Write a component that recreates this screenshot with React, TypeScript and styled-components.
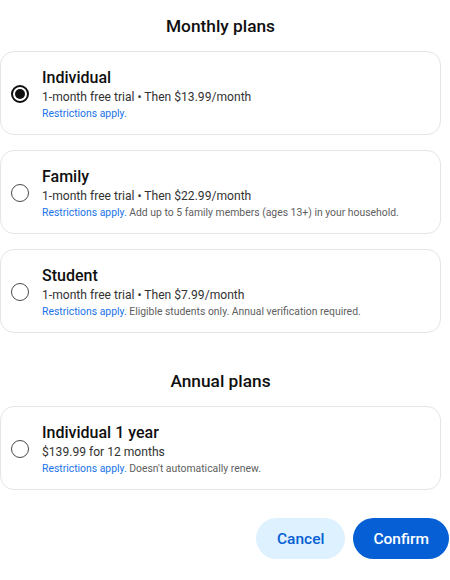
import React, { useState } from "react";
import styled, { createGlobalStyle } from "styled-components";

const GlobalStyle = createGlobalStyle`
  body {
    margin: 0;
    background: #ffffff;
    font-family: Roboto, "Liberation Sans", Arial, sans-serif;
    color: #0f0f0f;
  }
`;

const Page = styled.div`
  width: 441px;
  display: flex;
  flex-direction: column;
`;

const SectionTitle = styled.h2<{ $top: number }>`
  margin: 0;
  text-align: center;
  font-size: 17.3px;
  font-weight: 500;
  line-height: 24px;
  padding: ${(p) => p.$top}px 0 13px;
`;

const PlanList = styled.div`
  display: flex;
  flex-direction: column;
  gap: 15px;
`;

const PlanCard = styled.label`
  display: flex;
  align-items: center;
  gap: 13px;
  height: 84px;
  box-sizing: border-box;
  padding: 0 14px 0 10px;
  border: 1px solid #e5e5e5;
  border-radius: 14px;
  cursor: pointer;
`;

const Radio = styled.span<{ $checked: boolean }>`
  flex: none;
  width: 18px;
  height: 18px;
  box-sizing: border-box;
  border-radius: 50%;
  border: ${(p) => (p.$checked ? "2px solid #0f0f0f" : "1.5px solid #4a4a4a")};
  display: flex;
  align-items: center;
  justify-content: center;
  margin-top: 2px;

  &::after {
    content: "";
    width: 10px;
    height: 10px;
    border-radius: 50%;
    background: ${(p) => (p.$checked ? "#0f0f0f" : "transparent")};
  }
`;

const PlanText = styled.div`
  display: flex;
  flex-direction: column;
  margin-top: 2px;
`;

const PlanName = styled.div`
  font-size: 16px;
  font-weight: 500;
  line-height: 21px;
  color: #0f0f0f;
`;

const PlanPrice = styled.div`
  font-size: 12.1px;
  line-height: 19px;
  color: #333333;
`;

const PlanNote = styled.div`
  font-size: 10.4px;
  line-height: 14px;
  color: #606060;
`;

const Link = styled.span`
  color: #1a73e8;
`;

const Actions = styled.div`
  display: flex;
  justify-content: flex-end;
  gap: 8px;
  margin-top: 28px;
  margin-right: -8px;
`;

const Button = styled.button<{ $primary?: boolean }>`
  height: 41px;
  border: none;
  border-radius: 21px;
  padding: 0 ${(p) => (p.$primary ? "20px" : "21px")};
  font-family: Roboto, "Liberation Sans", Arial, sans-serif;
  font-size: 15.5px;
  font-weight: 500;
  cursor: pointer;
  background: ${(p) => (p.$primary ? "#065fd4" : "#def1ff")};
  color: ${(p) => (p.$primary ? "#ffffff" : "#065fd4")};
`;

type Plan = { id: string; name: string; price: string; note?: string };

const monthly: Plan[] = [
  { id: "individual", name: "Individual", price: "1-month free trial \u2022 Then $13.99/month" },
  {
    id: "family",
    name: "Family",
    price: "1-month free trial \u2022 Then $22.99/month",
    note: "Add up to 5 family members (ages 13+) in your household.",
  },
  {
    id: "student",
    name: "Student",
    price: "1-month free trial \u2022 Then $7.99/month",
    note: "Eligible students only. Annual verification required.",
  },
];

const annual: Plan[] = [
  {
    id: "individual-year",
    name: "Individual 1 year",
    price: "$139.99 for 12 months",
    note: "Doesn't automatically renew.",
  },
];

export default function App() {
  const [selected, setSelected] = useState("individual");

  const renderPlan = (plan: Plan) => (
    <PlanCard key={plan.id} onClick={() => setSelected(plan.id)}>
      <Radio $checked={selected === plan.id} />
      <PlanText>
        <PlanName>{plan.name}</PlanName>
        <PlanPrice>{plan.price}</PlanPrice>
        <PlanNote>
          <Link>Restrictions apply.</Link>
          {plan.note ? " " + plan.note : ""}
        </PlanNote>
      </PlanText>
    </PlanCard>
  );

  return (
    <>
      <GlobalStyle />
      <Page>
        <SectionTitle $top={14}>Monthly plans</SectionTitle>
        <PlanList>{monthly.map(renderPlan)}</PlanList>
        <SectionTitle $top={36}>Annual plans</SectionTitle>
        <PlanList>{annual.map(renderPlan)}</PlanList>
        <Actions>
          <Button>Cancel</Button>
          <Button $primary>Confirm</Button>
        </Actions>
      </Page>
    </>
  );
}
